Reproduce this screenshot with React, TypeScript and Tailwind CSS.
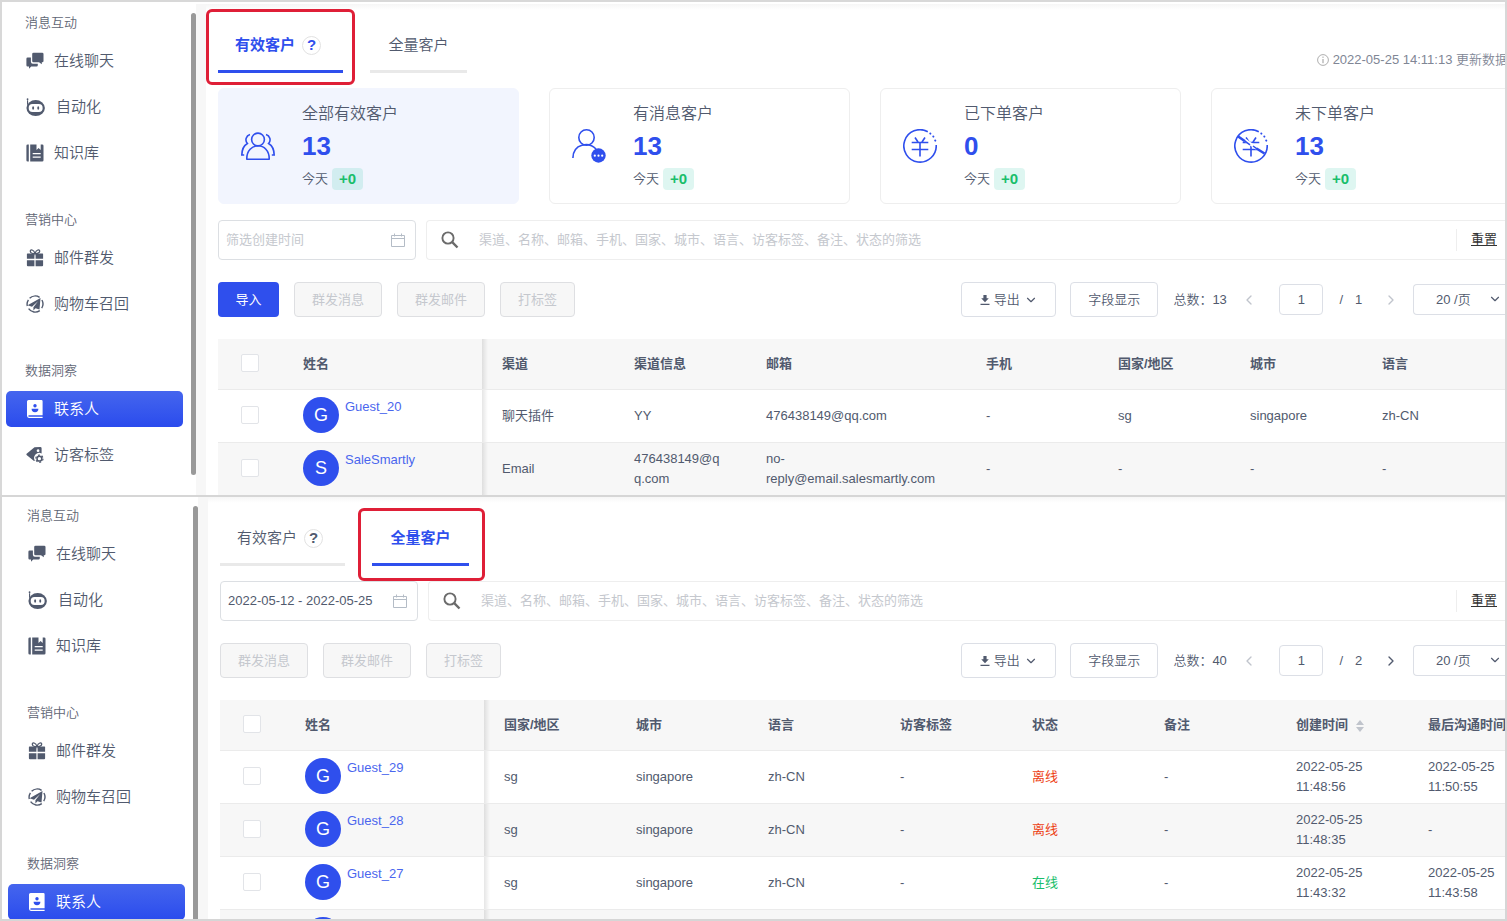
import React from "react";
import { ChevronDown, ChevronLeft, ChevronRight } from "lucide-react";
import clsx from "clsx";

type IconProps = { className?: string };

function ChatIcon({ className }: IconProps) {
  return (
    <svg viewBox="0 0 18 18" className={className} fill="currentColor">
      <path d="M7.500.8h8.700a1.300 1.300 0 0 1 1.300 1.300v6.900a1.300 1.300 0 0 1-1.300 1.300h-.4v2l-2.800-2H7.500a1.300 1.300 0 0 1-1.300-1.300V2.100A1.300 1.300 0 0 1 7.500.8z" />
      <path d="M1.600 5.500h3.300v4.300A2 2 0 0 0 6.900 11.800h4.900v1.500a1.200 1.200 0 0 1-1.200 1.200H5.200L3 16.700v-2.200H1.600A1.200 1.200 0 0 1 .4 13.300V6.700A1.200 1.200 0 0 1 1.600 5.500z" />
    </svg>
  );
}

function BotIcon({ className }: IconProps) {
  return (
    <svg viewBox="0 0 18 18" className={className} fill="currentColor">
      <circle cx="1.400" cy="2" r="0.800" />
      <path d="M.9 3h1v4h-1z" />
      <ellipse cx="8.700" cy="10" rx="8.300" ry="7.200" />
      <rect x="2.400" y="6.400" width="12.600" height="7" rx="3.500" fill="#fff" />
      <ellipse cx="6.400" cy="9.900" rx="0.900" ry="1.500" />
      <ellipse cx="11" cy="9.900" rx="0.900" ry="1.500" />
    </svg>
  );
}

function BookIcon({ className }: IconProps) {
  return (
    <svg viewBox="0 0 18 18" className={className} fill="currentColor">
      <path d="M1.700.5h1.100v17H1.700A1.300 1.300 0 0 1 .4 16.200V1.800A1.300 1.300 0 0 1 1.700.5z" />
      <path d="M4.200.5h6.300v5.400l2.100-1.900 2.100 1.900V.5h1.500a1.300 1.300 0 0 1 1.300 1.300v14.400a1.300 1.300 0 0 1-1.300 1.300h-12z" />
      <path d="M6.700 9h8v1.300h-8zM6.700 12.500h8v1.300h-8z" fill="#fff" />
    </svg>
  );
}

function GiftIcon({ className }: IconProps) {
  return (
    <svg viewBox="0 0 18 18" className={className}>
      <path
        d="M9 4.800C7.300 4.800 4.300 4 4.300 2.200 4.300.2 7.700.2 9 4.600 10.300.2 13.700.2 13.700 2.200c0 1.800-3 2.600-4.700 2.600z"
        fill="none"
        stroke="currentColor"
        strokeWidth="1.300"
      />
      <path d="M1.500 4.500h6.900v5.300H.9V5.100a.6.600 0 0 1 .6-.6zM9.600 4.500h6.900a.6.600 0 0 1 .6.600v4.700H9.600zM.9 11.300h7.500v6H1.900a1 1 0 0 1-1-1zM9.600 11.300h7.500v5a1 1 0 0 1-1 1H9.600z" fill="currentColor" />
    </svg>
  );
}

function RecallIcon({ className }: IconProps) {
  return (
    <svg viewBox="0 0 18 18" className={className}>
      <g fill="none" stroke="currentColor" strokeWidth="1.400">
        <path d="M3.600 3.300A8 8 0 0 1 13.600 2.400" />
        <path d="M2.400 4.800A8 8 0 0 0 1.300 11" />
        <path d="M2.600 13.700A8 8 0 0 0 13.800 15.600" />
        <path d="M15.900 5A8 8 0 0 1 15.700 13.200" />
      </g>
      <path d="M14.500 3L1.600 10.200l4.400 1.600L12 6.200l-4.600 6v3.400l2.100-2.400 4 1.300z" fill="currentColor" />
    </svg>
  );
}

function ContactIcon({ className }: IconProps) {
  return (
    <svg viewBox="0 0 18 18" className={className} fill="currentColor">
      <path d="M2.600 0h12.800a1.200 1.200 0 0 1 1.200 1.200v14H3a.7.700 0 0 0 0 1.500h13.600V18H3A2.200 2.200 0 0 1 1 15.800V1.600A1.600 1.600 0 0 1 2.600 0z" />
      <circle cx="9" cy="5.700" r="1.700" fill="#2f4fed" />
      <path d="M5.600 8.800h6.800a3.400 3.400 0 0 1-6.800 0z" fill="#2f4fed" />
    </svg>
  );
}

function TagIcon({ className }: IconProps) {
  return (
    <svg viewBox="0 0 18 18" className={className}>
      <path
        d="M8.500 1.300l5.800-.3a1.300 1.300 0 0 1 1.300 1.300v5.100a5.200 5.200 0 0 0-6.700 7.400l-.9.200L.6 8.900a.9.900 0 0 1 0-1.200zM12 3.300a1.400 1.400 0 1 0 .1 2.800 1.400 1.400 0 0 0-.1-2.800z"
        fill="currentColor"
        fillRule="evenodd"
      />
      <circle cx="13.400" cy="12.700" r="2.400" fill="none" stroke="currentColor" strokeWidth="1.500" />
      <circle cx="13.400" cy="12.700" r="3.600" fill="none" stroke="currentColor" strokeWidth="1.200" strokeDasharray="1.900 1.870" />
    </svg>
  );
}

function UsersIcon() {
  return (
    <svg viewBox="0 0 34 34" className="size-[34px]" fill="none" stroke="#2f4fed" strokeWidth="1.600">
      <circle cx="17" cy="10.500" r="6.400" />
      <path d="M5.800 30.300c-.6-18 23-18 22.400 0z" strokeLinejoin="round" />
      <path d="M9 5.500a5.500 5.500 0 0 0-2.600 9C3 16.500.9 20.500.8 26H3.200M25 5.500a5.500 5.500 0 0 1 2.600 9c3.400 2 5.500 6 5.600 11.500h-2.400" />
    </svg>
  );
}

function UserMessageIcon() {
  return (
    <svg viewBox="0 0 34 34" className="size-[34px]" fill="none" stroke="#2f4fed" strokeWidth="1.600">
      <circle cx="14.500" cy="8.500" r="7.700" />
      <path d="M.9 29C1.200 14.500 17 12.500 24 20" />
      <circle cx="26.500" cy="26.500" r="7.200" fill="#2f4fed" stroke="none" />
      <g fill="#fff" stroke="none">
        <circle cx="22.800" cy="26.700" r="1.100" />
        <circle cx="26.500" cy="26.700" r="1.100" />
        <circle cx="30.200" cy="26.700" r="1.100" />
      </g>
    </svg>
  );
}

function YenIcon({ off }: { off?: boolean }) {
  return (
    <svg viewBox="0 0 34 34" className="size-[34px]" fill="none" stroke="#2f4fed" strokeWidth="1.600">
      <path d="M24.800 2.700A16.200 16.200 0 1 0 33.200 16" />
      <path d="M27.300 4.500l.1.100M30.300 7.500l.1.100M32.200 11.500l.1.100" strokeWidth="2" strokeLinecap="round" />
      <path d="M12 8.500l3 4.500M22 8.500l-3 4.500M8.700 13.500h16.600M8.700 20.500h16.600M17 13.500v14" />
      {off && (
        <>
          <path d="M6 7.500l22 15.500" stroke="#fff" strokeWidth="3" />
          <path d="M3.500 7l7.500 5.200M22.500 19.500l8 5" strokeWidth="2.600" />
          <path d="M11 12.200l5 3.600M19 17l4 2.800" strokeWidth="1.500" />
        </>
      )}
    </svg>
  );
}

function CalendarIcon() {
  return (
    <svg viewBox="0 0 14 14" className="size-3.5 shrink-0" fill="none" stroke="#b4bcc6">
      <path d="M.5 2.500h13v11H.5zM.5 5.500h13M3.500.5v3M10.500.5v3" />
    </svg>
  );
}

function SearchIcon() {
  return (
    <svg viewBox="0 0 18 18" className="size-[18px] shrink-0" fill="none" stroke="#6b6b6b">
      <circle cx="7" cy="7" r="5.600" strokeWidth="1.900" />
      <path d="M11.200 11.200l5.300 5.300" strokeWidth="2.400" />
    </svg>
  );
}

function DownloadIcon() {
  return (
    <svg viewBox="0 0 10 10" className="size-2.5" fill="#515a6e">
      <path d="M3.400 0h3.200v3.200h2.200L5 7.200 1.200 3.200h2.200zM.5 8.700h9V10h-9z" />
    </svg>
  );
}

const menu = [
  {
    title: "消息互动",
    items: [
      { label: "在线聊天", icon: <ChatIcon className="size-[18px]" /> },
      { label: "自动化", icon: <BotIcon className="size-5" /> },
      { label: "知识库", icon: <BookIcon className="size-[18px]" /> },
    ],
  },
  {
    title: "营销中心",
    items: [
      { label: "邮件群发", icon: <GiftIcon className="size-[18px]" /> },
      { label: "购物车召回", icon: <RecallIcon className="size-[18px]" /> },
    ],
  },
  {
    title: "数据洞察",
    items: [
      { label: "联系人", icon: <ContactIcon className="size-[18px]" />, active: true },
      { label: "访客标签", icon: <TagIcon className="size-[18px]" /> },
    ],
  },
];

function Sidebar({ short }: { short?: boolean }) {
  return (
    <>
      <nav className="w-[189px] shrink-0 pt-2 pl-1 pr-2">
        {menu.map((group, i) => {
          const items = short ? group.items.filter((item) => i < 2 || item.active) : group.items;
          return (
            <div key={group.title} className={clsx(i > 0 && "mt-[38px]")}>
              <h3 className="pl-[19px] text-[13px] leading-[21px] font-[350] text-[#5f6675]">{group.title}</h3>
              <ul className="mt-2.5 flex flex-col gap-2.5">
                {items.map((item) => (
                  <li key={item.label}>
                    <a
                      href="#"
                      className={clsx(
                        "flex h-9 items-center gap-2.5 rounded-[5px] pl-5 text-[15px] font-[350]",
                        item.active
                          ? "bg-linear-to-b from-[#4565ee] to-[#2b4bed] text-white"
                          : "text-[#515a6e]"
                      )}
                    >
                      {item.icon}
                      <span>{item.label}</span>
                    </a>
                  </li>
                ))}
              </ul>
            </div>
          );
        })}
      </nav>
      <div className={clsx("mt-[9px] w-[5px] shrink-0 rounded-full bg-[#999]", short ? "-mb-2" : "mb-5")} />
      <div className="w-2.5 shrink-0 bg-[#f7f7f7]" />
    </>
  );
}

function Tabs({ active }: { active: "valid" | "all" }) {
  const on = "border-[#2f4fed] font-bold text-[#2f4fed]";
  const off = "border-[#e9e9e9] font-[350] text-[#515a6e]";
  return (
    <div className="flex gap-[27px]">
      <button
        type="button"
        className={clsx("relative flex h-[69px] w-[125px] items-center border-b-3 pt-4 pb-0 pl-[17px] text-[15px]", active === "valid" ? on : off)}
      >
        有效客户
        <span className="ml-[7px] flex size-[19px] items-center justify-center rounded-full border border-[#e2e2e2] text-[15px] font-bold">?</span>
        {active === "valid" && <i className="absolute -right-3 -bottom-[15px] top-[5px] -left-3 rounded-md border-3 border-[#df1f37]" />}
      </button>
      <button
        type="button"
        className={clsx("relative flex h-[69px] w-[97px] items-center justify-center border-b-3 pt-4 text-[15px]", active === "all" ? on : off)}
      >
        全量客户
        {active === "all" && <i className="absolute -right-4 -bottom-[18px] top-[11px] -left-3.5 z-10 rounded-md border-3 border-[#df1f37]" />}
      </button>
    </div>
  );
}

const stats = [
  { title: "全部有效客户", value: 13, icon: <UsersIcon />, selected: true },
  { title: "有消息客户", value: 13, icon: <UserMessageIcon /> },
  { title: "已下单客户", value: 0, icon: <YenIcon /> },
  { title: "未下单客户", value: 13, icon: <YenIcon off /> },
];

function Stats() {
  return (
    <div className="mt-[15px] flex gap-[30px]">
      {stats.map((s) => (
        <div
          key={s.title}
          className={clsx(
            "flex h-[116px] w-[301px] shrink-0 items-center gap-[27px] rounded-md border pl-[22px]",
            s.selected ? "border-[#f2f5fe] bg-[#f2f5fe]" : "border-[#eee] bg-white"
          )}
        >
          {s.icon}
          <div>
            <div className="text-base leading-6 font-[350] text-[#515a6e]">{s.title}</div>
            <div className="pb-0.5 text-[26px] leading-10 font-bold text-[#2f4fed]">{s.value}</div>
            <div className="flex items-center gap-1 text-[13px] font-[350] text-[#515a6e]">
              今天
              <span className="rounded bg-[#00b894]/13 px-[7px] text-[15px] leading-[22px] font-bold text-[#19be6b]">+0</span>
            </div>
          </div>
        </div>
      ))}
    </div>
  );
}

function Filters({ date }: { date?: string }) {
  return (
    <div className="flex gap-2.5 text-[13px]">
      <label className="flex h-10 w-[198px] shrink-0 items-center rounded border border-[#dcdfe3] bg-white pr-2.5 pl-[7px]">
        <input
          type="text"
          aria-label="筛选创建时间"
          placeholder="筛选创建时间"
          defaultValue={date}
          className="min-w-0 flex-1 text-[#515a6e] outline-none placeholder:text-[#c5c8ce]"
        />
        <CalendarIcon />
      </label>
      <div className="flex h-10 flex-1 items-center rounded-l border border-r-0 border-[#eee] bg-white pr-2 pl-3.5">
        <SearchIcon />
        <input
          type="search"
          aria-label="搜索"
          placeholder="渠道、名称、邮箱、手机、国家、城市、语言、访客标签、备注、状态的筛选"
          className="ml-5 min-w-0 flex-1 outline-none placeholder:text-[#c5c8ce]"
        />
        <a href="#" className="border-l border-[#eee] pl-3.5 leading-[22px] text-[#333] underline">
          重置
        </a>
      </div>
    </div>
  );
}

function Toolbar({ canImport, total, pages }: { canImport?: boolean; total: number; pages: number }) {
  const disabled = "h-[35px] rounded border border-[#dedfe2] bg-[#f7f7f7] text-[#c5c8ce]";
  const plain = "h-[35px] rounded border border-[#dcdfe6] bg-white font-[350] text-[#515a6e]";
  return (
    <div className="mt-[22px] flex items-center justify-between text-[13px]">
      <div className="flex gap-[15px]">
        {canImport && (
          <button type="button" className="h-[35px] w-[61px] rounded bg-[#2f4fed] text-white">
            导入
          </button>
        )}
        <button type="button" disabled className={clsx(disabled, "w-[88px]")}>群发消息</button>
        <button type="button" disabled className={clsx(disabled, "w-[88px]")}>群发邮件</button>
        <button type="button" disabled className={clsx(disabled, "w-[75px]")}>打标签</button>
      </div>
      <div className="flex items-center text-[#515a6e]">
        <button type="button" className={clsx(plain, "flex w-[95px] items-center justify-center gap-1")}>
          <DownloadIcon />
          导出
          <ChevronDown className="size-3.5" />
        </button>
        <button type="button" className={clsx(plain, "ml-3.5 w-[88px]")}>字段显示</button>
        <span className="ml-[15px] w-[55px] font-[350] whitespace-nowrap">总数：{total}</span>
        <button type="button" aria-label="上一页" disabled className="ml-[11px] flex w-5 justify-center text-[#c0c4cc]">
          <ChevronLeft className="size-4" />
        </button>
        <input
          type="text"
          aria-label="页码"
          defaultValue="1"
          className="ml-5 h-[31px] w-11 rounded border border-[#dcdfe6] text-center outline-none"
        />
        <span className="ml-4">/</span>
        <span className="ml-3 w-2">{pages}</span>
        <button
          type="button"
          aria-label="下一页"
          className={clsx("ml-[18px] flex w-5 justify-center", pages === 1 && "text-[#c0c4cc]")}
        >
          <ChevronRight className="size-4" />
        </button>
        <div className="relative ml-3 w-[92px]">
          <select
            aria-label="每页条数"
            className="h-[31px] w-full appearance-none rounded-l border border-r-0 border-[#dcdfe6] bg-white pl-[22px] font-[350] outline-none"
          >
            <option>20 /页</option>
          </select>
          <ChevronDown className="pointer-events-none absolute top-2 right-[3px] size-3.5" />
        </div>
      </div>
    </div>
  );
}

type Column = { label: string; width?: string; sortable?: boolean };
type Row = { name: string; cells: string[] };

function StatusCell({ text }: { text: string }) {
  if (text === "离线") return <span className="text-[#ed4014]">{text}</span>;
  if (text === "在线") return <span className="text-[#19be6b]">{text}</span>;
  return <>{text}</>;
}

const checkbox = "mx-auto block size-[18px] appearance-none rounded-[2px] border border-[#e2e4e8] bg-white";
const fixedEdge = "bg-linear-to-r from-black/10 to-transparent to-[6px]";

function ContactTable({ columns, rows }: { columns: Column[]; rows: Row[] }) {
  return (
    <div className="mt-[22px] overflow-hidden">
      <table className="w-full table-fixed border-separate border-spacing-0 text-left text-[13px] leading-5 text-[#515a6e]">
        <colgroup>
          <col className="w-[65px]" />
          <col className="w-[199px]" />
          {columns.map((c) => (
            <col key={c.label} className={c.width} />
          ))}
        </colgroup>
        <thead>
          <tr className="bg-[#f7f7f7]">
            <th className="h-[51px] border-b border-[#ebebeb] pr-0.5 pb-0.5">
              <input type="checkbox" aria-label="全选" className={checkbox} />
            </th>
            <th className="border-b border-[#ebebeb] pl-5 font-bold">姓名</th>
            {columns.map((c, i) => (
              <th key={c.label} className={clsx("border-b border-[#ebebeb] pl-5 font-bold whitespace-nowrap", i === 0 && fixedEdge)}>
                {c.label}
                {c.sortable && (
                  <svg viewBox="0 0 8 12" className="ml-2 inline h-3 w-2" fill="#c0c4cc">
                    <path d="M4 0l4 5H0zM4 12l4-5H0z" />
                  </svg>
                )}
              </th>
            ))}
          </tr>
        </thead>
        <tbody>
          {rows.map((row, n) => (
            <tr key={n} className="group bg-white even:bg-[#f7f7f7]">
              <td className="h-[53px] border-b border-[#ebebeb] pr-0.5 pb-0.5 group-last:h-[52px] group-last:border-b-0">
                <input type="checkbox" aria-label={`选择 ${row.name}`} className={checkbox} />
              </td>
              <td className="border-b border-[#ebebeb] pb-0.5 pl-5 group-last:border-b-0">
                <div className="flex items-start gap-1.5">
                  <span className="flex size-9 items-center justify-center rounded-full bg-[#2f4fed] text-lg text-white">
                    {row.name[0]}
                  </span>
                  <a href="#" className="text-[#4a66ee]">{row.name}</a>
                </div>
              </td>
              {row.cells.map((cell, i) => (
                <td
                  key={i}
                  className={clsx("border-b border-[#ebebeb] pr-6 pl-5 break-words group-last:border-b-0", i === 0 && fixedEdge)}
                >
                  <StatusCell text={cell} />
                </td>
              ))}
            </tr>
          ))}
        </tbody>
      </table>
    </div>
  );
}

const validColumns: Column[] = [
  { label: "渠道", width: "w-[132px]" },
  { label: "渠道信息", width: "w-[132px]" },
  { label: "邮箱", width: "w-[220px]" },
  { label: "手机", width: "w-[132px]" },
  { label: "国家/地区", width: "w-[132px]" },
  { label: "城市", width: "w-[132px]" },
  { label: "语言" },
];

const validRows: Row[] = [
  { name: "Guest_20", cells: ["聊天插件", "YY", "476438149@qq.com", "-", "sg", "singapore", "zh-CN"] },
  { name: "SaleSmartly", cells: ["Email", "476438149@qq.com", "no-reply@email.salesmartly.com", "-", "-", "-", "-"] },
];

const allColumns: Column[] = [
  { label: "国家/地区", width: "w-[132px]" },
  { label: "城市", width: "w-[132px]" },
  { label: "语言", width: "w-[132px]" },
  { label: "访客标签", width: "w-[132px]" },
  { label: "状态", width: "w-[132px]" },
  { label: "备注", width: "w-[132px]" },
  { label: "创建时间", width: "w-[132px]", sortable: true },
  { label: "最后沟通时间", width: "w-[132px]" },
];

const allRows: Row[] = [
  { name: "Guest_29", cells: ["sg", "singapore", "zh-CN", "-", "离线", "-", "2022-05-25 11:48:56", "2022-05-25 11:50:55"] },
  { name: "Guest_28", cells: ["sg", "singapore", "zh-CN", "-", "离线", "-", "2022-05-25 11:48:35", "-"] },
  { name: "Guest_27", cells: ["sg", "singapore", "zh-CN", "-", "在线", "-", "2022-05-25 11:43:32", "2022-05-25 11:43:58"] },
  { name: "", cells: ["", "", "", "", "", "", "", ""] },
];

export default function App() {
  return (
    <div className="flex h-screen flex-col overflow-hidden bg-white font-['Liberation_Sans','Noto_Sans_CJK_SC',sans-serif]">
      <section className="flex shrink-0 overflow-hidden border-2 border-[#d8d8d8] border-b-0 pt-0.5">
        <Sidebar />
        <main className="min-w-0 flex-1 overflow-hidden bg-linear-to-b from-[#f6f6f6] to-white to-[6px] pl-3">
          <div className="flex items-end justify-between">
            <Tabs active="valid" />
            <p className="-mr-[3px] flex shrink-0 items-center gap-1 pb-[3px] text-[13px] leading-5 font-[350] text-[#808695]">
              <svg viewBox="0 0 12 12" className="size-3" fill="none" stroke="#999">
                <circle cx="6" cy="6" r="5.400" strokeWidth="0.800" />
                <path d="M6 2.600v1.200M6 5v4.200" />
              </svg>
              2022-05-25 14:11:13 更新数据
            </p>
          </div>
          <Stats />
          <div className="mt-4">
            <Filters />
          </div>
          <Toolbar canImport total={13} pages={1} />
          <ContactTable columns={validColumns} rows={validRows} />
        </main>
      </section>
      <section className="flex min-h-0 flex-1 overflow-hidden border-2 border-[#d6d6d6] pl-0.5">
        <Sidebar short />
        <main className="min-w-0 flex-1 overflow-hidden bg-linear-to-b from-[#f6f6f6] to-white to-[6px] pl-3">
          <Tabs active="all" />
          <div className="mt-[15px]">
            <Filters date="2022-05-12 - 2022-05-25" />
          </div>
          <Toolbar total={40} pages={2} />
          <ContactTable columns={allColumns} rows={allRows} />
        </main>
      </section>
    </div>
  );
}
